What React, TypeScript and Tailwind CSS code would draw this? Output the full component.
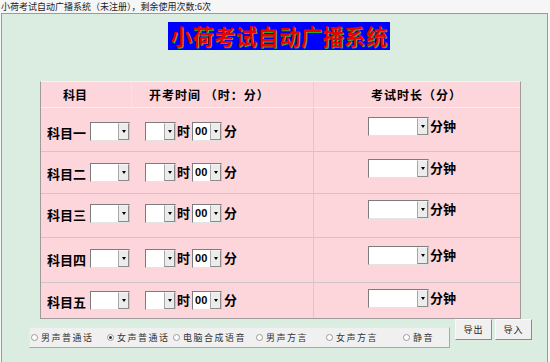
import React from 'react';

const cjk = "font-['Noto_Sans_CJK_SC','Liberation_Sans',sans-serif]";

function Combo({ width, value }: { width: number; value?: string }) {
  return (
    <div
      className="flex h-[19px] shrink-0 border border-t-[#7c7c7c] border-l-[#7c7c7c] border-r-[#c8c8c8] border-b-[#e4e4e4] bg-white"
      style={{ width }}
    >
      <div className="flex flex-1 items-center pl-[2px] font-['Liberation_Sans',sans-serif] text-[11px] font-bold leading-none text-black">
        {value}
      </div>
      <div className="flex w-[11px] items-center justify-center border border-t-[#f4f4f4] border-l-[#a8a8a8] border-r-[#8a8a8a] border-b-[#8a8a8a] bg-[#ececec]">
        <div className="h-0 w-0 border-x-[2px] border-t-[3px] border-x-transparent border-t-black" />
      </div>
    </div>
  );
}

const rows = [
  { name: '科目一', h: 'h-[44px]', pl: 'pt-[14px]', pr: 'pt-[9px]' },
  { name: '科目二', h: 'h-[42px]', pl: 'pt-[11px]', pr: 'pt-[7px]' },
  { name: '科目三', h: 'h-[44px]', pl: 'pt-[10px]', pr: 'pt-[6px]' },
  { name: '科目四', h: 'h-[45px]', pl: 'pt-[11px]', pr: 'pt-[8px]' },
  { name: '科目五', h: 'h-[35px]', pl: 'pt-[8px]', pr: 'pt-[6px]' },
];

const voices = [
  { label: '男声普通话', w: 'w-[76px]' },
  { label: '女声普通话', w: 'w-[66px]', on: true },
  { label: '电脑合成语音', w: 'w-[83px]' },
  { label: '男声方言', w: 'w-[70px]' },
  { label: '女声方言', w: 'w-[77px]' },
  { label: '静音', w: 'w-[40px]' },
];

export default function App() {
  return (
    <div className={`h-[362px] w-[550px] overflow-hidden bg-[#f6f6f6] ${cjk}`}>
      <div className="flex h-[13px] items-center pl-[1px] text-[9px] leading-none text-[#222]">
        小荷考试自动广播系统（未注册），剩余使用次数:6次
      </div>
      <div className="ml-[1px] h-[360px] w-[547px] border-l border-t border-r border-[#9a9a9a] bg-[#dbece0] pt-[8px]">
        <div className="ml-[166px] flex h-[28px] w-[222px] items-center justify-center bg-[#0000ff] text-[21.5px] font-bold leading-none tracking-[0.2px] text-[#ee0000] [text-shadow:1px_1px_0_#22aa33]">
          小荷考试自动广播系统
        </div>

        <div className="ml-[38px] mt-[31px] w-[481px] border border-[#a09a9c] border-t-[#f2f2f2] bg-[#fdd6dc]">
          <div className="grid h-[26px] grid-cols-[91px_182px_206px] border-b border-[#f4eef0] text-[12px] font-bold leading-none text-black">
            <div className="flex items-center border-r border-[#f0e6e8] pl-[22px]">科目</div>
            <div className="flex items-center border-r border-[#e0d0d4] pl-[17px] tracking-[1px]">开考时间 （时：分）</div>
            <div className="flex items-center pl-[57px] tracking-[1px]">考试时长（分）</div>
          </div>
          {rows.map((r, i) => (
            <div
              key={r.name}
              className={`grid grid-cols-[91px_182px_206px] ${r.h} ${i < rows.length - 1 ? 'border-b border-[#cfc4c6]' : ''} text-[13px] font-bold leading-none text-black`}
            >
              <div className={`flex items-start border-r border-[#ebdde0] pl-[6px] ${r.pl}`}>
                <span className="mr-[4px] mt-[4px]">{r.name}</span>
                <Combo width={40} />
              </div>
              <div className={`flex items-start border-r border-[#d8c8cc] pl-[13px] ${r.pl}`}>
                <Combo width={31} />
                <span className="ml-[1px] mr-[2px] mt-[2px]">时</span>
                <Combo width={30} value="00" />
                <span className="ml-[2px] mt-[2px]">分</span>
              </div>
              <div className={`flex items-start pl-[54px] ${r.pr}`}>
                <Combo width={61} />
                <span className="ml-[1px] mt-[2px]">分钟</span>
              </div>
            </div>
          ))}
        </div>

        <div className="flex items-start">
          <div className="ml-[27px] mt-[8px] flex h-[21px] w-[421px] items-center border border-[#e8e8e8] border-r-[#a8a8a8] border-b-[#a8a8a8] bg-[#f0f0f0] pl-[1px] text-[9px] leading-none text-[#333]">
            {voices.map((v) => (
              <div key={v.label} className={`flex shrink-0 items-center ${v.w}`}>
                <div className="flex h-[7px] w-[7px] items-center justify-center rounded-full border border-[#9a9a9a] bg-white">
                  {v.on && <div className="h-[3px] w-[3px] rounded-full bg-[#333]" />}
                </div>
                <span className="ml-[3px] tracking-[1.5px]">{v.label}</span>
              </div>
            ))}
          </div>
          <div className="ml-[5px] mt-0 flex gap-[3px]">
            {['导出', '导入'].map((b) => (
              <div
                key={b}
                className="flex h-[21px] w-[37px] items-center justify-center border border-[#fafafa] border-r-[#8a8a8a] border-b-[#8a8a8a] bg-[#f0f0f0] text-[9px] leading-none tracking-[1px] text-[#222]"
              >
                {b}
              </div>
            ))}
          </div>
        </div>
      </div>
    </div>
  );
}
